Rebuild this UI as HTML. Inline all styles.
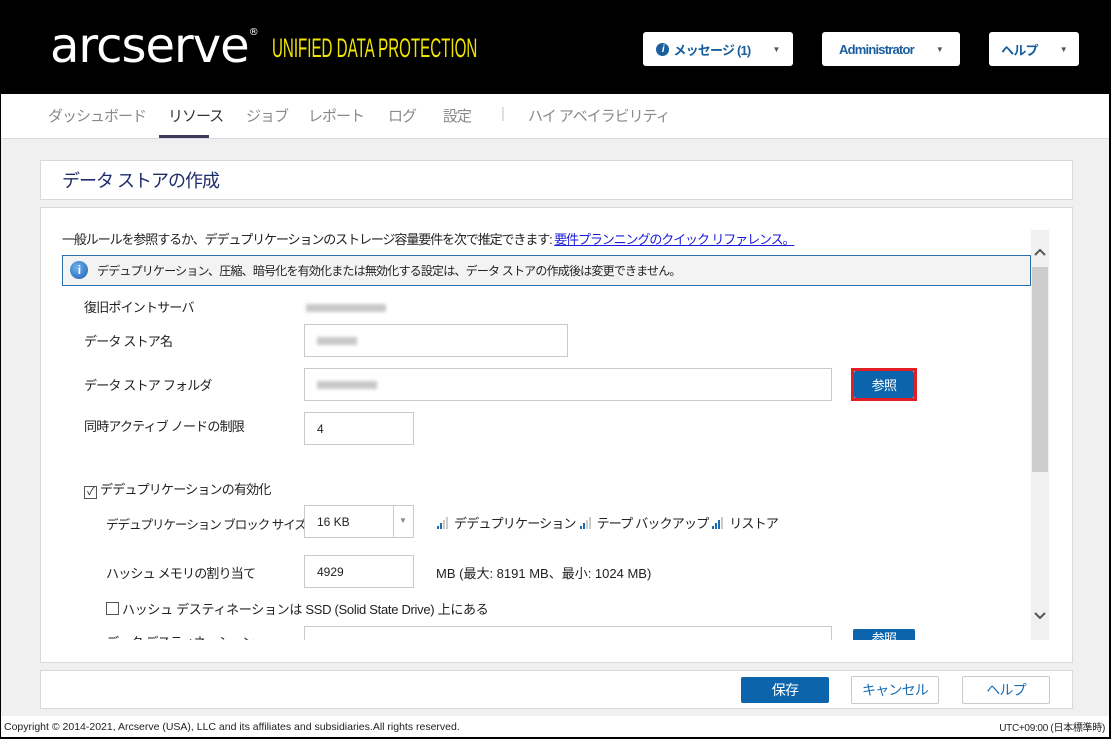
<!DOCTYPE html>
<html><head><meta charset="utf-8"><style>
*{box-sizing:border-box;margin:0;padding:0}
body{width:1111px;height:739px;overflow:hidden;background:#f0f0f0;font-family:"Liberation Sans","Noto Sans CJK JP",sans-serif;position:relative;font-size:13px;color:#222;letter-spacing:-0.8px}
.a{position:absolute;white-space:nowrap}
#hdr{left:0;top:0;width:1111px;height:94px;background:#000}
.hb{position:absolute;top:32px;height:34px;background:#fff;border-radius:3px;color:#1a5e9e;font-weight:bold;font-size:13px;display:flex;align-items:center;justify-content:center;letter-spacing:-0.8px}
.car{font-size:8px;margin-left:22px;color:#555}
#nav{left:0;top:94px;width:1111px;height:45px;background:#fff;border-bottom:1px solid #d6dbe0}
.ni{position:absolute;top:105px;font-size:15px;color:#8a8a8a;letter-spacing:-1px}
.panel{position:absolute;left:40px;width:1033px;background:#fff;border:1px solid #d3d9df}
.lbl{position:absolute;left:84px;font-size:13px;color:#222;white-space:nowrap}
.inp{position:absolute;background:#fff;border:1px solid #c9c9c9;font-size:12px;padding-left:12px;display:flex;align-items:center;letter-spacing:0}
.blur{display:inline-block;height:8px;background:#c8c8c8;filter:blur(1.5px)}
.btnb{position:absolute;background:#0c65ac;color:#fff;font-size:14px;display:flex;align-items:center;justify-content:center;border-radius:2px}
.btnw{position:absolute;background:#fff;color:#1a6db3;border:1px solid #c9c9c9;font-size:14px;display:flex;align-items:center;justify-content:center;border-radius:2px}
.sig{display:inline-block;vertical-align:-1px;margin-right:4px}
</style></head><body>
<div id="hdr" class="a">
 <div class="a" style="left:50px;top:18px;color:#fff;font-size:48px;letter-spacing:-1px;font-family:'DejaVu Sans','Liberation Sans',sans-serif;line-height:56px">arcserve<span style="font-size:10px;vertical-align:top;line-height:30px">®</span></div>
 <div class="a" style="left:272px;top:30px;color:#f2e600;font-size:27px;letter-spacing:0;font-family:'Liberation Sans Narrow','Liberation Sans',sans-serif;transform:scaleX(0.56);transform-origin:left;white-space:nowrap;line-height:36px">UNIFIED DATA PROTECTION</div>
 <div class="hb" style="left:643px;width:150px"><span style="display:inline-block;width:13px;height:13px;border-radius:50%;background:#1a5e9e;color:#fff;font-size:10px;line-height:13px;text-align:center;margin-right:4px;font-style:italic">i</span>メッセージ (1)<span class="car">▼</span></div>
 <div class="hb" style="left:822px;width:138px">Administrator<span class="car">▼</span></div>
 <div class="hb" style="left:989px;width:90px">ヘルプ<span class="car">▼</span></div>
</div>
<div id="nav" class="a"></div>
<div class="ni" style="left:48px">ダッシュボード</div>
<div class="ni" style="left:168px;color:#333">リソース</div>
<div class="a" style="left:159px;top:135px;width:50px;height:3px;background:#3e3a5a"></div>
<div class="ni" style="left:246px">ジョブ</div>
<div class="ni" style="left:308px">レポート</div>
<div class="ni" style="left:388px">ログ</div>
<div class="ni" style="left:443px">設定</div>
<div class="ni" style="left:501px;color:#ccc">|</div>
<div class="ni" style="left:528px">ハイ アベイラビリティ</div>

<div class="panel" style="top:160px;height:40px"><div class="a" style="left:21px;top:6px;font-size:18px;color:#1f2d6b;letter-spacing:-1px">データ ストアの作成</div></div>
<div class="panel" style="top:207px;height:456px"></div>
<div class="a" style="left:62px;top:229px;font-size:13px;letter-spacing:-1.1px">一般ルールを参照するか、デデュプリケーションのストレージ容量要件を次で推定できます: <span style="color:#1a1adc;text-decoration:underline">要件プランニングのクイック リファレンス。</span></div>
<div class="a" style="left:62px;top:255px;width:969px;height:31px;background:#f3f3f3;border:1px solid #2a6fb0"></div>
<div class="a" style="left:70px;top:261px;width:18px;height:18px;border-radius:50%;background:radial-gradient(circle at 40% 35%,#6fb2ef,#1a5fae);color:#fff;font-size:12px;font-weight:bold;text-align:center;line-height:18px">i</div>
<div class="a" style="left:97px;top:262px;font-size:12px;letter-spacing:-0.8px">デデュプリケーション、圧縮、暗号化を有効化または無効化する設定は、データ ストアの作成後は変更できません。</div>
<!-- scrollbar -->
<div class="a" style="left:1031px;top:230px;width:18px;height:410px;background:#f0f0f0"></div>
<div class="a" style="left:1032px;top:267px;width:16px;height:205px;background:#cdcdcd"></div>
<svg class="a" style="left:1034px;top:248px" width="12" height="8"><path d="M1 7 L6 2 L11 7" fill="none" stroke="#555" stroke-width="2"/></svg>
<svg class="a" style="left:1034px;top:612px" width="12" height="8"><path d="M1 1 L6 6 L11 1" fill="none" stroke="#555" stroke-width="2"/></svg>

<div class="lbl" style="top:297px">復旧ポイントサーバ</div>
<div class="a" style="left:306px;top:300px"><span class="blur" style="width:80px"></span></div>
<div class="lbl" style="top:331px">データ ストア名</div>
<div class="inp" style="left:304px;top:324px;width:264px;height:33px"><span class="blur" style="width:40px"></span></div>
<div class="lbl" style="top:375px">データ ストア フォルダ</div>
<div class="inp" style="left:304px;top:368px;width:528px;height:33px"><span class="blur" style="width:60px"></span></div>
<div class="a" style="left:851px;top:368px;width:66px;height:33px;border:3px solid #e41e25"></div>
<div class="btnb" style="left:854px;top:371px;width:60px;height:27px;font-size:13px">参照</div>
<div class="lbl" style="top:416px">同時アクティブ ノードの制限</div>
<div class="inp" style="left:304px;top:412px;width:110px;height:33px">4</div>
<div class="lbl" style="top:479px"><span style="display:inline-block;width:13px;height:13px;border:1px solid #555;font-size:11px;line-height:11px;text-align:center;vertical-align:-1px;margin-right:3px">✓</span>デデュプリケーションの有効化</div>
<div class="lbl" style="left:106px;top:514px;font-size:12.5px;letter-spacing:-1px">デデュプリケーション&nbsp;ブロック&nbsp;サイズ</div>
<div class="inp" style="left:304px;top:505px;width:110px;height:33px">16 KB<span style="position:absolute;left:88px;top:0;width:1px;height:31px;background:#ccc"></span><span style="position:absolute;left:94px;top:10px;font-size:8px;color:#888">▼</span></div>
<div class="a" style="left:436px;top:513px;font-size:13px;white-space:nowrap">
<svg class="sig" width="14" height="12"><rect x="1" y="9" width="2" height="3" fill="#1a6db3"/><rect x="4" y="6" width="2" height="6" fill="#1a6db3"/><rect x="7" y="3" width="2" height="9" fill="#ccc"/><rect x="10" y="0" width="2" height="12" fill="#ccc"/></svg>デデュプリケーション
<svg class="sig" width="14" height="12"><rect x="1" y="9" width="2" height="3" fill="#1a6db3"/><rect x="4" y="6" width="2" height="6" fill="#1a6db3"/><rect x="7" y="3" width="2" height="9" fill="#ccc"/><rect x="10" y="0" width="2" height="12" fill="#ccc"/></svg>テープ バックアップ
<svg class="sig" width="14" height="12"><rect x="1" y="9" width="2" height="3" fill="#1a6db3"/><rect x="4" y="6" width="2" height="6" fill="#1a6db3"/><rect x="7" y="3" width="2" height="9" fill="#1a6db3"/><rect x="10" y="0" width="2" height="12" fill="#ccc"/></svg>リストア</div>
<div class="lbl" style="left:106px;top:563px">ハッシュ メモリの割り当て</div>
<div class="inp" style="left:304px;top:555px;width:110px;height:33px">4929</div>
<div class="a" style="left:436px;top:563px;letter-spacing:0">MB (最大: 8191 MB、最小: 1024 MB)</div>
<div class="lbl" style="left:106px;top:599px;letter-spacing:-0.3px"><span style="display:inline-block;width:13px;height:13px;border:1px solid #555;vertical-align:-1px;margin-right:3px"></span>ハッシュ デスティネーションは SSD (Solid State Drive) 上にある</div>
<div class="a" style="left:44px;top:626px;width:985px;height:14px;overflow:hidden">
 <div class="a" style="left:62px;top:6px;font-size:13px">データ デスティネーション</div>
 <div class="a" style="left:260px;top:0;width:528px;height:30px;border:1px solid #c9c9c9"></div>
 <div class="a" style="left:809px;top:3px;width:62px;height:20px;background:#0c65ac;border-radius:2px;color:#fff;font-size:13px;text-align:center;line-height:20px">参照</div>
</div>
<div class="panel" style="top:670px;height:39px"></div>
<div class="btnb" style="left:741px;top:677px;width:88px;height:26px">保存</div>
<div class="btnw" style="left:851px;top:676px;width:88px;height:28px">キャンセル</div>
<div class="btnw" style="left:962px;top:676px;width:88px;height:28px">ヘルプ</div>
<div class="a" style="left:0;top:716px;width:1111px;height:23px;background:#fff"></div>
<div class="a" style="left:4px;top:721px;font-size:10.5px;letter-spacing:0">Copyright © 2014-2021, Arcserve (USA), LLC and its affiliates and subsidiaries.All rights reserved.</div>
<div class="a" style="right:6px;top:719px;font-size:10px;letter-spacing:-0.3px">UTC+09:00 (日本標準時)</div>
<div class="a" style="left:0;top:0;width:1111px;height:739px;border:1px solid #000;border-right-width:2px;border-bottom-width:2px"></div>
</body></html>
